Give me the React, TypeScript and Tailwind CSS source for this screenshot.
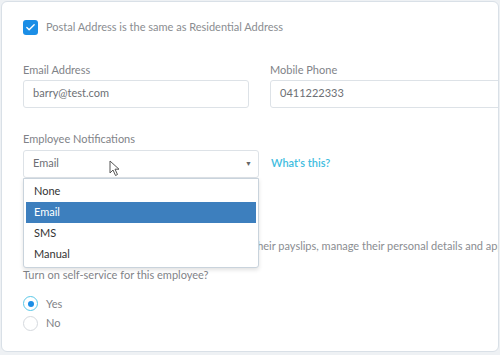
import { Check } from "lucide-react";

const options = ["None", "Email", "SMS", "Manual"];

export default function App() {
  return (
    <div
      className="h-[355px] w-[500px] overflow-hidden bg-[#eef1f4] p-px"
      style={{ fontFamily: "Lato, 'Open Sans', sans-serif" }}
    >
      <div className="h-[351px] w-[498px] overflow-hidden rounded-md border border-[#d9e0e7] bg-white pl-[21px] pt-[17px]">
        <label className="flex items-center gap-[8px]">
          <span className="flex size-[15px] items-center justify-center rounded-[3px] bg-[#1b8ee6]">
            <Check className="size-[11px] text-white" strokeWidth={3} />
          </span>
          <span className="text-[11px] text-[#8a8d91]">
            Postal Address is the same as Residential Address
          </span>
        </label>

        <div className="mt-[26px] flex gap-[21px]">
          <div className="w-[226px] shrink-0">
            <p className="text-[11px] leading-4 text-[#7f8388]">Email Address</p>
            <div className="mt-[2px] flex h-[28px] items-center rounded-[3px] border border-[#dde2e7] px-[9px] text-[11px] text-[#6d7075]">
              barry@test.com
            </div>
          </div>
          <div className="w-[240px] shrink-0">
            <p className="text-[11px] leading-4 text-[#7f8388]">Mobile Phone</p>
            <div className="mt-[2px] flex h-[28px] w-[260px] items-center rounded-[3px] border border-[#dde2e7] px-[9px] text-[11px] text-[#6d7075]">
              0411222333
            </div>
          </div>
        </div>

        <p className="mt-[23px] text-[11px] leading-4 text-[#7f8388]">Employee Notifications</p>
        <div className="relative mt-[3px] flex items-center gap-[12px]">
          <div className="flex h-[28px] w-[236px] items-center justify-between rounded-[3px] border border-[#dde2e7] pl-[9px] pr-[6px] text-[11px] text-[#6d7075]">
            <span>Email</span>
            <span className="text-[7px] text-[#666]">▼</span>
          </div>
          <a className="text-[11px] font-semibold text-[#3fbde0]">What's this?</a>

          <svg className="absolute left-[86px] top-[10px]" width="12" height="17" viewBox="0 0 12 17">
            <path d="M1 1 L1 13 L4 10 L6.5 15.5 L8.5 14.5 L6 9.2 L10 9.2 Z" fill="white" stroke="#555" strokeWidth="1" strokeLinejoin="round" />
          </svg>

          <ul className="absolute left-0 top-[28px] z-10 w-[236px] rounded-b-[3px] border border-[#c9d3dc] bg-white py-[2px] text-[11px] text-[#333] shadow-[0_2px_4px_rgba(0,0,0,0.12)]">
            {options.map((o) => (
              <li
                key={o}
                className={
                  o === "Email"
                    ? "mx-[2px] flex h-[21px] items-center bg-[#3d7fbe] px-[8px] text-white"
                    : "flex h-[21px] items-center px-[10px]"
                }
              >
                {o}
              </li>
            ))}
          </ul>
        </div>

        <p className="mt-[60px] whitespace-nowrap text-[11px] text-[#8a8d91]">
          Self service allows your new employees to view their payslips, manage their personal details and apply for leave.
        </p>

        <p className="mt-[13px] text-[11px] text-[#7f8388]">Turn on self-service for this employee?</p>
        <div className="mt-[12px] flex flex-col gap-[3px]">
          <label className="flex items-center gap-[8px]">
            <span className="flex size-[15px] items-center justify-center rounded-full border border-[#5ac8e8]">
              <span className="size-[6px] rounded-full bg-[#1b8ee6]" />
            </span>
            <span className="text-[11px] text-[#7f8388]">Yes</span>
          </label>
          <label className="flex items-center gap-[8px]">
            <span className="size-[15px] rounded-full border border-[#d5d9de]" />
            <span className="text-[11px] text-[#7f8388]">No</span>
          </label>
        </div>
      </div>
    </div>
  );
}
